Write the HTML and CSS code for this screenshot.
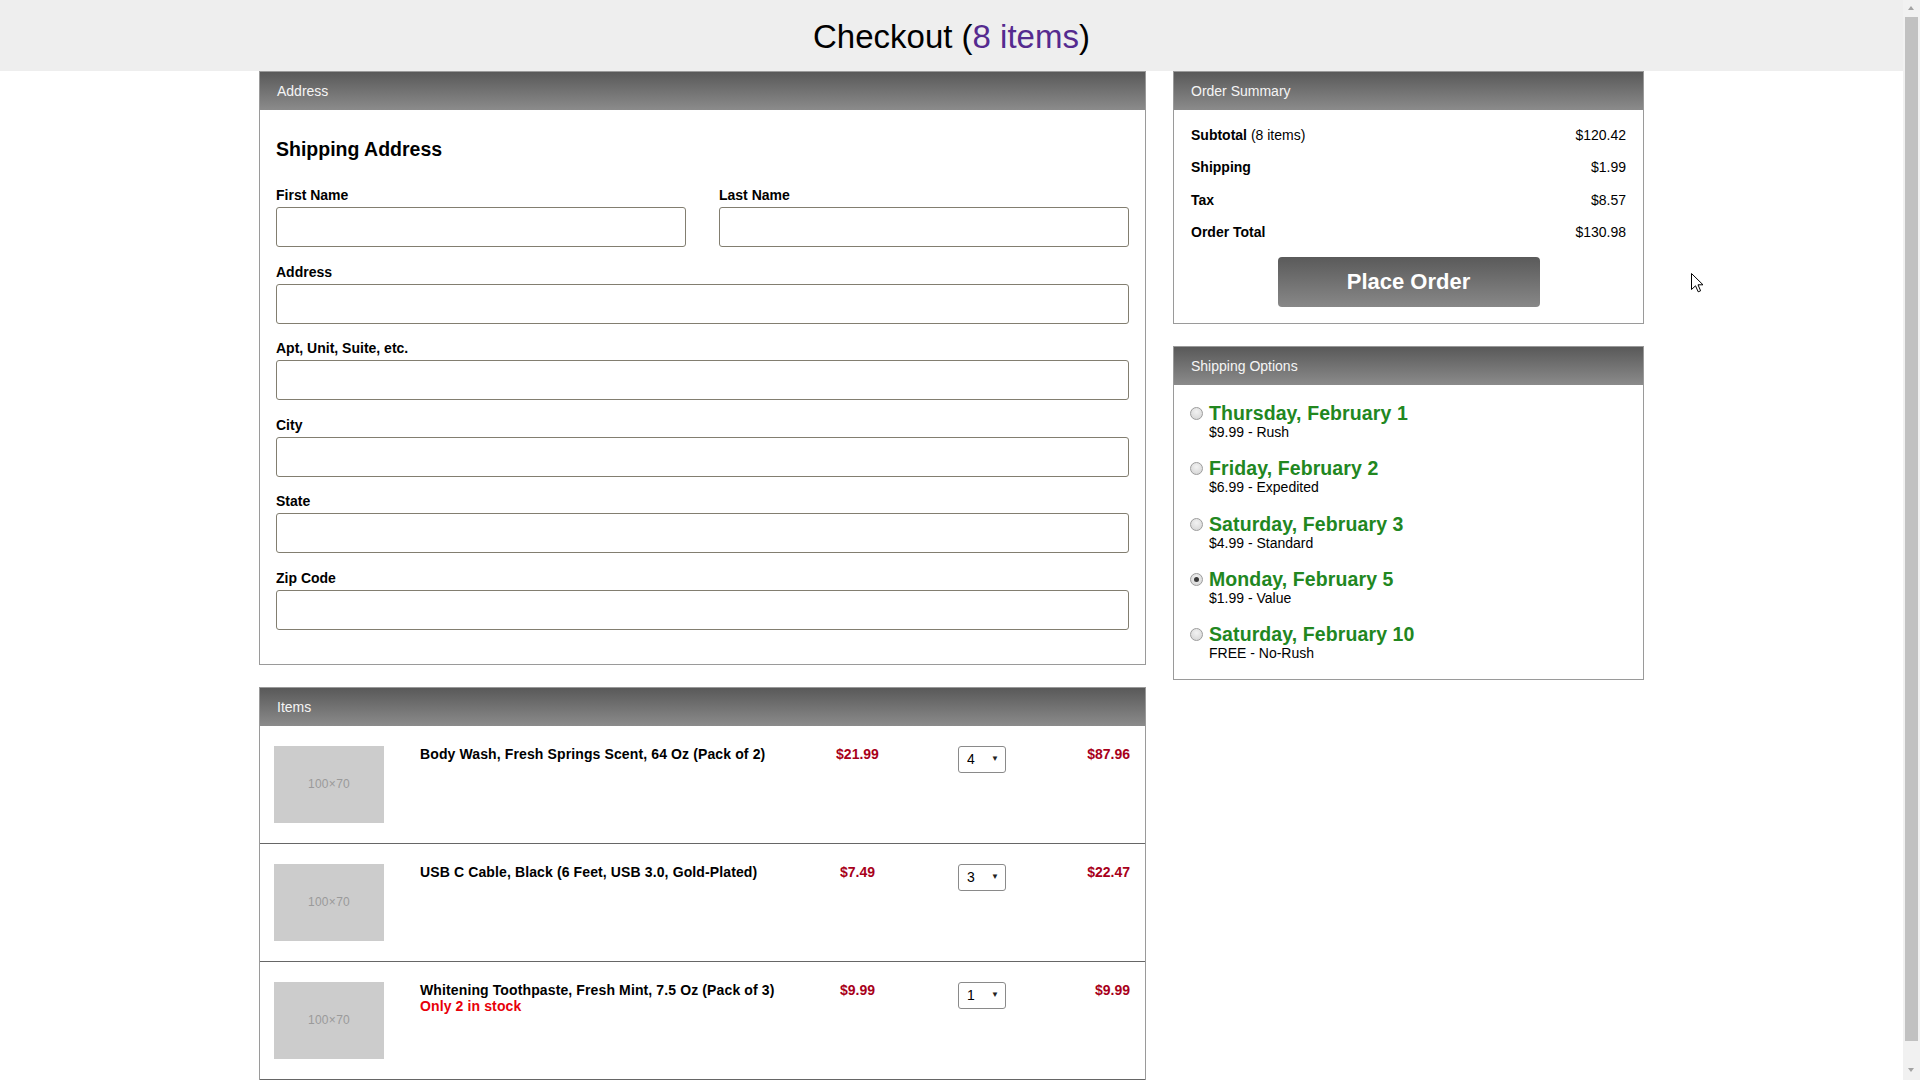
FILE: index.html
```html
<!DOCTYPE html>
<html lang="en">
<head>
<meta charset="utf-8">
<title>Checkout</title>
<link rel="stylesheet" href="styles.css">
</head>
<body>
<div class="page">
  <header class="topbar">
    <h1 class="page-title">Checkout (<span class="count">8 items</span>)</h1>
  </header>

  <div class="layout">
    <main class="col-main">
      <section class="panel">
        <div class="panel-head">Address</div>
        <div class="panel-body address-body">
          <h2 class="section-title">Shipping Address</h2>
          <div class="field-row">
            <div class="field"><label>First Name</label><input type="text"></div>
            <div class="field"><label>Last Name</label><input type="text"></div>
          </div>
          <div class="field"><label>Address</label><input type="text"></div>
          <div class="field"><label>Apt, Unit, Suite, etc.</label><input type="text"></div>
          <div class="field"><label>City</label><input type="text"></div>
          <div class="field"><label>State</label><input type="text"></div>
          <div class="field"><label>Zip Code</label><input type="text"></div>
        </div>
      </section>

      <section class="panel">
        <div class="panel-head">Items</div>
        <div class="item">
          <div class="thumb"><span>100×70</span></div>
          <div class="item-name">Body Wash, Fresh Springs Scent, 64 Oz (Pack of 2)</div>
          <div class="item-price">$21.99</div>
          <div class="item-qty"><div class="qty"><select><option>4</option></select></div></div>
          <div class="item-total">$87.96</div>
        </div>
        <div class="item">
          <div class="thumb"><span>100×70</span></div>
          <div class="item-name">USB C Cable, Black (6 Feet, USB 3.0, Gold-Plated)</div>
          <div class="item-price">$7.49</div>
          <div class="item-qty"><div class="qty"><select><option>3</option></select></div></div>
          <div class="item-total">$22.47</div>
        </div>
        <div class="item">
          <div class="thumb"><span>100×70</span></div>
          <div class="item-name">Whitening Toothpaste, Fresh Mint, 7.5 Oz (Pack of 3)<div class="stock">Only 2 in stock</div></div>
          <div class="item-price">$9.99</div>
          <div class="item-qty"><div class="qty"><select><option>1</option></select></div></div>
          <div class="item-total">$9.99</div>
        </div>
      </section>
    </main>

    <aside class="col-side">
      <section class="panel">
        <div class="panel-head">Order Summary</div>
        <div class="panel-body summary-body">
          <div class="sum-row"><span><b>Subtotal</b> (8 items)</span><span>$120.42</span></div>
          <div class="sum-row"><span><b>Shipping</b></span><span>$1.99</span></div>
          <div class="sum-row"><span><b>Tax</b></span><span>$8.57</span></div>
          <div class="sum-row"><span><b>Order Total</b></span><span>$130.98</span></div>
          <button class="place-order">Place Order</button>
        </div>
      </section>

      <section class="panel">
        <div class="panel-head">Shipping Options</div>
        <div class="panel-body options-body">
          <div class="option"><span class="radio"></span><div><div class="opt-date">Thursday, February 1</div><div class="opt-sub">$9.99 - Rush</div></div></div>
          <div class="option"><span class="radio"></span><div><div class="opt-date">Friday, February 2</div><div class="opt-sub">$6.99 - Expedited</div></div></div>
          <div class="option"><span class="radio"></span><div><div class="opt-date">Saturday, February 3</div><div class="opt-sub">$4.99 - Standard</div></div></div>
          <div class="option"><span class="radio checked"></span><div><div class="opt-date">Monday, February 5</div><div class="opt-sub">$1.99 - Value</div></div></div>
          <div class="option"><span class="radio"></span><div><div class="opt-date">Saturday, February 10</div><div class="opt-sub">FREE - No-Rush</div></div></div>
        </div>
      </section>
    </aside>
  </div>
</div>

<div class="scrollbar">
  <span class="arrow-up"></span>
  <span class="sb-thumb"></span>
  <span class="arrow-down"></span>
</div>

<svg class="cursor" width="13" height="20" viewBox="0 0 13 20">
  <path d="M0.5 0.5 L0.5 16.5 L4.5 12.8 L7.2 18.8 L9.6 17.8 L7 11.8 L12 11.8 Z" fill="#fff" stroke="#000" stroke-width="1"/>
</svg>
</body>
</html>
```

FILE: styles.css
```css
* { box-sizing: border-box; }

html, body {
  margin: 0;
  padding: 0;
  height: 100%;
  overflow: hidden;
}

body {
  font-family: "Liberation Sans", Arial, sans-serif;
  font-size: 14px;
  color: #000;
  background: #fff;
}

.page {
  width: 1903px;
}

.topbar {
  height: 71px;
  background: #eeeeee;
  display: flex;
  align-items: center;
  justify-content: center;
}

.page-title {
  margin: 1px 0 0;
  font-size: 33px;
  font-weight: normal;
  line-height: 37px;
  color: #000;
}

.page-title .count {
  color: #552a8f;
}

.layout {
  width: 1385px;
  margin: 0 auto;
  display: flex;
  gap: 27px;
  align-items: flex-start;
}

.col-main { width: 887px; }
.col-side { width: 471px; }

.panel {
  border: 1px solid #9a9a9a;
  margin-bottom: 22px;
  background: #fff;
}

.panel-head {
  height: 38px;
  line-height: 38px;
  padding-left: 17px;
  background: linear-gradient(#595959, #8b8b8b);
  color: #f5f5f5;
  font-size: 14px;
}

/* Address */
.address-body {
  padding: 17px 16px 17px;
}

.section-title {
  margin: 11px 0 26px;
  font-size: 19.5px;
  line-height: 23px;
  font-weight: bold;
}

.field-row {
  display: flex;
  gap: 33px;
}

.field-row .field { flex: 1; }

.field {
  margin-bottom: 16.6px;
}

.field label {
  display: block;
  font-size: 14px;
  line-height: 16px;
  font-weight: bold;
  margin-bottom: 4px;
}

.field input {
  display: block;
  width: 100%;
  height: 40px;
  border: 1px solid #827e70;
  border-radius: 3px;
  background: #fff;
  font: inherit;
}

/* Items */
.item {
  display: grid;
  grid-template-columns: 110px 1fr 85px 138px 92px;
  align-items: start;
  padding: 20px 15px 20px 14px;
  border-bottom: 1px solid #666;
  font-size: 14px;
  line-height: 16px;
  font-weight: bold;
}

.thumb {
  width: 110px;
  height: 77px;
  background: #cccccc;
  display: flex;
  align-items: center;
  justify-content: center;
}

.thumb span {
  font-family: "Liberation Sans Narrow", "Liberation Sans", Arial, sans-serif;
  font-weight: normal;
  font-size: 12px;
  letter-spacing: 0.3px;
  color: #9a9a9a;
}

.item-name {
  padding-left: 36px;
  letter-spacing: 0.12px;
}

.stock {
  color: #e8000a;
}

.item-price {
  text-align: center;
  color: #a8001a;
}

.item-qty {
  padding-left: 58px;
}

.qty {
  position: relative;
  width: 48px;
  height: 27px;
}

.qty select {
  -webkit-appearance: none;
  appearance: none;
  width: 48px;
  height: 27px;
  border: 1px solid #8a8a8a;
  border-radius: 3px;
  background: #fff;
  padding: 0 0 0 8px;
  font-family: "Liberation Sans", Arial, sans-serif;
  font-size: 14px;
  font-weight: normal;
  color: #000;
}

.qty::after {
  content: "▼";
  position: absolute;
  right: 7px;
  top: 8px;
  font-size: 8px;
  line-height: 10px;
  color: #222;
  pointer-events: none;
}

.item-total {
  text-align: right;
  color: #a8001a;
}

/* Summary */
.summary-body {
  padding: 17px 17px 16px;
}

.sum-row {
  display: flex;
  justify-content: space-between;
  line-height: 16px;
  margin-bottom: 16.4px;
}

.sum-row:nth-child(4) {
  margin-bottom: 17px;
}

.place-order {
  display: block;
  width: 262px;
  height: 50px;
  margin: 0 auto;
  border: none;
  border-radius: 4px;
  background: linear-gradient(#5a5a5a, #888888);
  color: #fff;
  font-family: "Liberation Sans", Arial, sans-serif;
  font-size: 22px;
  font-weight: bold;
}

/* Shipping options */
.options-body {
  padding: 17px 16px 18px;
}

.option {
  display: flex;
  align-items: flex-start;
  margin-bottom: 17.3px;
}

.option:last-child { margin-bottom: 0; }

.radio {
  flex: none;
  width: 13px;
  height: 13px;
  margin-top: 5px;
  margin-right: 6px;
  border: 1px solid #9c9c9c;
  border-radius: 50%;
  background: radial-gradient(circle at 50% 35%, #f2f2f2, #d2d2d2);
  position: relative;
}

.radio.checked::after {
  content: "";
  position: absolute;
  left: 3px;
  top: 3px;
  width: 5px;
  height: 5px;
  border-radius: 50%;
  background: #3a3a3a;
}

.opt-date {
  font-size: 19.5px;
  line-height: 22px;
  font-weight: bold;
  color: #22871f;
  letter-spacing: 0.1px;
}

.opt-sub {
  font-size: 14px;
  line-height: 16px;
}

/* Fake browser scrollbar and cursor (overlays) */
.scrollbar {
  position: fixed;
  top: 0;
  right: 0;
  width: 17px;
  height: 1080px;
  background: #f1f1f1;
}

.sb-thumb {
  position: absolute;
  top: 17px;
  left: 2px;
  width: 13px;
  height: 1024px;
  background: #c1c1c1;
}

.arrow-up, .arrow-down {
  position: absolute;
  left: 5px;
  width: 0;
  height: 0;
  border-left: 3.5px solid transparent;
  border-right: 3.5px solid transparent;
}

.arrow-up {
  top: 6px;
  border-bottom: 4px solid #a3a3a3;
}

.arrow-down {
  top: 1068px;
  border-top: 4px solid #a3a3a3;
}

.cursor {
  position: fixed;
  left: 1691px;
  top: 273px;
}
```
